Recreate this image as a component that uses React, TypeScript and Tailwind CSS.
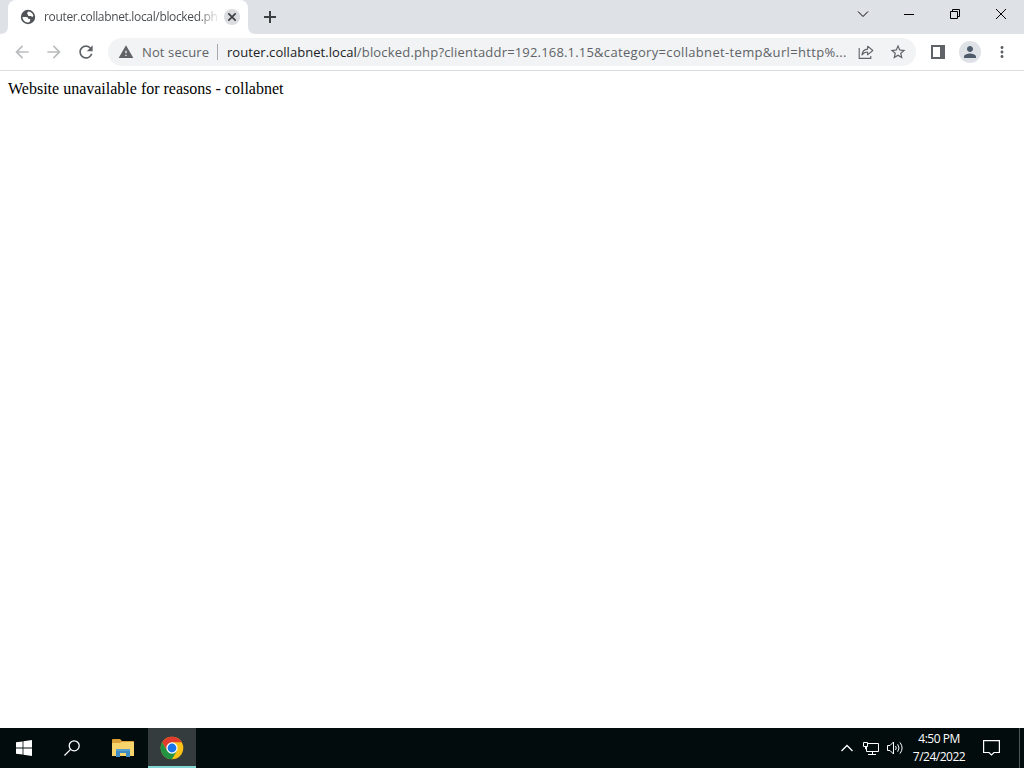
import React from 'react';
import {
  MdArrowBack,
  MdArrowForward,
  MdMoreVert,
  MdPerson,
  MdRefresh,
  MdStarBorder,
  MdWarning
} from 'react-icons/md';

const page = {
  title: 'router.collabnet.local/blocked.ph',
  host: 'router.collabnet.local',
  path: '/blocked.php?clientaddr=192.168.1.15',
  query: '&category=collabnet-temp&url=http%...',
  message: 'Website unavailable for reasons - collabnet'
};

function GlobeIcon() {
  return (
    <svg className="shrink-0" width="16" height="16" viewBox="0 0 16 16">
      <circle cx="8" cy="8" r="7.2" fill="#505458" />
      <path d="M8.6 2.6 C11 2.8 13 4.6 13.4 7 C12.6 8.2 11.4 8 11 7 H9.2 C8.2 7 7.8 6.4 7.9 5.5 C6.8 5.2 6.9 3.4 8.6 2.6 Z" fill="#fff" />
      <path d="M2.5 8 H6 C7.6 8 8.4 8.8 8.4 10 H10.2 V11.2 C10.2 12.6 9 13.5 7.7 13.5 C4.8 13.4 2.6 11 2.5 8 Z" fill="#fff" />
    </svg>
  );
}

function WindowControls() {
  return (
    <div className="ml-auto flex h-7 text-black">
      <div className="flex w-[46px] items-center justify-center">
        <svg width="12" height="12" viewBox="0 0 12 12" fill="none" stroke="currentColor">
          <path d="M1 3.5 L6 8.5 L11 3.5" />
        </svg>
      </div>
      <div className="flex w-[46px] items-center justify-center">
        <svg width="10" height="10" viewBox="0 0 10 10" fill="none" stroke="currentColor">
          <path d="M0 5.5 H10" />
        </svg>
      </div>
      <div className="flex w-[46px] items-center justify-center">
        <svg width="10" height="10" viewBox="0 0 10 10" fill="none" stroke="currentColor">
          <path d="M0.5 2.5 H7.5 V9.5 H0.5 Z M2.5 2.5 V0.5 H9.5 V7.5 H7.5" />
        </svg>
      </div>
      <div className="flex w-[46px] items-center justify-center">
        <svg width="10" height="10" viewBox="0 0 10 10" fill="none" stroke="currentColor">
          <path d="M0 0 L10 10 M10 0 L0 10" />
        </svg>
      </div>
    </div>
  );
}

function TabStrip() {
  return (
    <div className="flex h-[34px] shrink-0 bg-[#dee1e6]">
      <svg className="shrink-0" width="8" height="34" viewBox="0 0 8 34">
        <path d="M8 26 Q8 34 0 34 H8 Z" fill="#fff" />
      </svg>
      <div className="flex h-[34px] w-60 shrink-0 items-center rounded-t-lg bg-white pl-3 pr-2">
        <GlobeIcon />
        <span className="ml-2 w-[174px] whitespace-nowrap bg-linear-to-r from-[#45484c] from-88% to-[#45484c]/10 bg-clip-text font-['Open_Sans','Noto_Sans',sans-serif] text-[12px] leading-4 tracking-[-0.34px] text-transparent">
          {page.title}
        </span>
        <div className="ml-[6px] flex h-4 w-4 shrink-0 items-center justify-center rounded-full bg-[#dadce0]">
          <svg width="8" height="8" viewBox="0 0 8 8" fill="none" stroke="#3c4043" strokeWidth="1.7">
            <path d="M0.3 0.3 L7.7 7.7 M7.7 0.3 L0.3 7.7" />
          </svg>
        </div>
      </div>
      <svg className="shrink-0" width="8" height="34" viewBox="0 0 8 34">
        <path d="M0 26 Q0 34 8 34 H0 Z" fill="#fff" />
      </svg>
      <div className="flex w-7 items-center justify-center">
        <svg width="12" height="12" viewBox="0 0 12 12" fill="none" stroke="#3c4043" strokeWidth="2">
          <path d="M6 0 V12 M0 6 H12" />
        </svg>
      </div>
      <WindowControls />
    </div>
  );
}

function Toolbar() {
  return (
    <div className="flex h-[37px] shrink-0 items-center border-b border-[#dadce0] bg-white pl-3 text-[#5f6368]">
      <MdArrowBack className="h-5 w-5 shrink-0 text-[#babcbe]" />
      <MdArrowForward className="ml-3 h-5 w-5 shrink-0 text-[#babcbe]" />
      <MdRefresh className="ml-3 h-5 w-5 shrink-0" />

      {/* Address bar */}
      <div className="ml-3 flex h-7 w-[808px] shrink-0 items-center rounded-full bg-[#f1f3f4] pl-[10px] pr-[9px] font-['Open_Sans','Noto_Sans',sans-serif] text-[13px]">
        <MdWarning className="h-4 w-4 shrink-0" />
        <span className="ml-2 w-[67px] whitespace-nowrap pt-px tracking-[0.12px]">Not secure</span>
        <div className="ml-2 h-4 w-px bg-[#a5a8ab]" />
        <span className="ml-[9px] w-[633px] whitespace-nowrap pt-px">
          <span className="tracking-[0.05px] text-[#202124]">{page.host}</span>
          <span className="tracking-[0.18px]">{page.path}</span>
          <span className="tracking-[0.33px]">{page.query}</span>
        </span>
        <svg className="shrink-0" width="16" height="16" viewBox="0 0 16 16" fill="none" stroke="currentColor" strokeWidth="1.1">
          <path d="M1.2 4 V14.4 H12.8 V12" />
          <path d="M4 11 C4.3 7.2 6.5 5.3 9.6 5.1 V2.2 L14.8 6.5 L9.6 10.8 V8 C7.2 8 5.5 8.8 4 11 Z" strokeLinejoin="round" />
        </svg>
        <MdStarBorder className="ml-[15px] h-[18px] w-[18px] shrink-0" />
      </div>

      <svg className="ml-[15px] shrink-0" width="14" height="14" viewBox="0 0 14 14" fill="none" stroke="currentColor" strokeWidth="2">
        <rect x="1" y="1" width="12" height="12" />
        <path d="M9 1 H13 V13 H9 Z" fill="currentColor" stroke="none" />
      </svg>
      <div className="ml-[14px] flex h-[22px] w-[22px] shrink-0 items-center justify-center rounded-full bg-[#dee1e6]">
        <MdPerson className="h-[18px] w-[18px] text-[#4d5b6b]" />
      </div>
      <MdMoreVert className="ml-3 h-[18px] w-[18px] shrink-0" />
    </div>
  );
}

function ChromeLogo() {
  return (
    <svg width="24" height="24" viewBox="0 0 24 24">
      <circle cx="12" cy="12" r="11.3" fill="#fbc116" />
      <path d="M2.2 6.35 A11.3 11.3 0 0 1 21.8 6.35 H12 L7.1 14.8 Z" fill="#e33b2e" />
      <path d="M2.2 6.35 A11.3 11.3 0 0 0 12 23.3 L16.9 14.83 L12 12 L7.1 14.83 Z" fill="#229342" />
      <circle cx="12" cy="12" r="5.65" fill="#fff" />
      <circle cx="12" cy="12" r="4.4" fill="#1a73e8" />
    </svg>
  );
}

function Taskbar() {
  return (
    <div className="flex h-10 shrink-0 bg-[#020c0d] text-white">
      <div className="flex w-12 items-center justify-center">
        <svg width="16" height="16" viewBox="0 0 16 16" fill="currentColor">
          <path d="M0 2.3 L6.6 1.4 V7.6 H0 Z M7.4 1.3 L16 0 V7.6 H7.4 Z M0 8.4 H6.6 V14.6 L0 13.7 Z M7.4 8.4 H16 V16 L7.4 14.7 Z" />
        </svg>
      </div>
      <div className="flex w-12 items-center justify-center">
        <svg width="16" height="16" viewBox="0 0 16 16" fill="none" stroke="currentColor" strokeWidth="1.3">
          <circle cx="10.2" cy="5.8" r="5" />
          <path d="M6.6 9.4 L0.5 15.5" />
        </svg>
      </div>
      <div className="flex w-[52px] items-center justify-center pl-[2px]">
        <svg width="22" height="18" viewBox="0 0 22 18">
          <path d="M0 1 Q0 0 1 0 H8 L10 2 H21 Q22 2 22 3 V17 H0 Z" fill="#dca23a" />
          <path d="M0 4 H8 L10 3 H22 V17 H0 Z" fill="#f7d56c" />
          <path d="M4 18 V11 Q4 10 5 10 H17 Q18 10 18 11 V18 H14 V14 H8 V18 Z" fill="#3f8cc4" />
          <path d="M4 12 H18 V11 Q18 10 17 10 H5 Q4 10 4 11 Z" fill="#569fce" />
        </svg>
      </div>
      <div className="flex w-12 items-center justify-center border-b-2 border-[#83d5d2] bg-[#343c3d] pt-[2px]">
        <ChromeLogo />
      </div>

      {/* System tray */}
      <div className="ml-auto flex items-center">
        <svg width="12" height="8" viewBox="0 0 12 8" fill="none" stroke="currentColor" strokeWidth="1.3">
          <path d="M0.5 7 L6 1.5 L11.5 7" />
        </svg>
        <svg className="ml-[10px]" width="16" height="15" viewBox="0 0 16 15" fill="none" stroke="currentColor">
          <path d="M5 2.5 H15.5 V10.5 H3.5 V6 M9.5 10.5 V13.5 M5 13.5 H13" />
          <path d="M0.5 1.5 H4.5 V5.5 H0.5 Z M2.5 5.5 V8 H3.5" />
        </svg>
        <svg className="ml-2" width="17" height="14" viewBox="0 0 17 14" fill="none" stroke="currentColor">
          <path d="M0.5 4.5 H3 L6.5 1 V13 L3 9.5 H0.5 Z" />
          <path d="M8.5 5 Q10 7 8.5 9 M10.7 3.3 Q13.3 7 10.7 10.7 M13 1.5 Q17.2 7 13 12.5" />
        </svg>
        <div className="ml-[5px] w-[60px] text-center font-['Open_Sans','Noto_Sans',sans-serif] text-[12px] leading-[18px] tracking-[-0.5px] whitespace-nowrap">
          <div>4:50 PM</div>
          <div>7/24/2022</div>
        </div>
        <svg className="ml-[14px]" width="17" height="16" viewBox="0 0 17 16" fill="none" stroke="currentColor" strokeWidth="1.2">
          <path d="M0.6 0.6 H16.4 V12.5 H11 L8.5 15 L6 12.5 H0.6 Z" />
        </svg>
        <div className="ml-[19px] mr-1 h-10 w-px bg-[#4d5556]" />
      </div>
    </div>
  );
}

export default function App() {
  return (
    <div className="flex h-screen w-screen flex-col overflow-hidden bg-white">
      <TabStrip />
      <Toolbar />
      <main className="flex-1 px-2 pt-[9px] font-['Liberation_Serif',serif] text-[16px] leading-[18px] text-black">
        {page.message}
      </main>
      <Taskbar />
    </div>
  );
}
